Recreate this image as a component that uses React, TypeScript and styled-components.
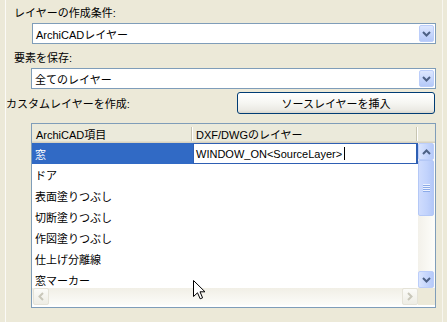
import React from 'react';
import styled, { createGlobalStyle } from 'styled-components';

const GlobalStyle = createGlobalStyle`
  html, body {
    margin: 0;
    padding: 0;
    background: #ece9d8;
  }
  body {
    font-family: "Liberation Sans", "Noto Sans CJK JP", sans-serif;
    font-size: 11px;
    color: #000;
  }
`;

const rows = ['窓', 'ドア', '表面塗りつぶし', '切断塗りつぶし', '作図塗りつぶし', '仕上げ分離線', '窓マーカー'];

const Chevron = ({ up, color = '#4d6185' }: { up?: boolean; color?: string }) => (
  <svg width="9" height="6" viewBox="0 0 9 6">
    <path d={up ? 'M1 5 L4.5 1.5 L8 5' : 'M1 1 L4.5 4.5 L8 1'} fill="none" stroke={color} strokeWidth="2" />
  </svg>
);

const SideChevron = ({ right, color = '#c9c7ba' }: { right?: boolean; color?: string }) => (
  <svg width="6" height="9" viewBox="0 0 6 9">
    <path d={right ? 'M1 1 L4.5 4.5 L1 8' : 'M5 1 L1.5 4.5 L5 8'} fill="none" stroke={color} strokeWidth="2" />
  </svg>
);

const App = () => {
  return (
    <Window>
      <GlobalStyle />
      <Panel>
        <Label>レイヤーの作成条件:</Label>
        <Combo indent={26} width={404}>
          <ComboText>ArchiCADレイヤー</ComboText>
          <DropButton><Chevron /></DropButton>
        </Combo>
        <Label top={2}>要素を保存:</Label>
        <Combo indent={25} width={405}>
          <ComboText>全てのレイヤー</ComboText>
          <DropButton><Chevron /></DropButton>
        </Combo>
        <ActionRow>
          <span>カスタムレイヤーを作成:</span>
          <PushButton>ソースレイヤーを挿入</PushButton>
        </ActionRow>
        <ListView>
          <Header>
            <HeaderCell width={160}>ArchiCAD項目<Separator /></HeaderCell>
            <HeaderCell width={225}>DXF/DWGのレイヤー<Separator /></HeaderCell>
          </Header>
          <Body>
            {rows.map((name, i) => (
              <Row key={name}>
                <NameCell selected={i === 0}>{name}</NameCell>
                {i === 0 && (
                  <EditField>
                    WINDOW_ON&lt;SourceLayer&gt;<Caret />
                  </EditField>
                )}
              </Row>
            ))}
          </Body>
          <VScroll>
            <ScrollButton><Chevron up /></ScrollButton>
            <Thumb><Grip /></Thumb>
            <Track />
            <ScrollButton><Chevron /></ScrollButton>
          </VScroll>
          <HScroll>
            <DisabledButton><SideChevron /></DisabledButton>
            <Track />
            <DisabledButton><SideChevron right /></DisabledButton>
          </HScroll>
          <Corner />
        </ListView>
      </Panel>
      <Cursor width="13" height="20" viewBox="0 0 13 20">
        <path d="M0.5 0.5 L0.5 16.5 L4.5 12.8 L7.2 18.8 L9.6 17.8 L7 11.8 L12 11.8 Z" fill="#fff" stroke="#000" strokeWidth="1" />
      </Cursor>
    </Window>
  );
};

const Window = styled.div`
  position: relative;
  width: 447px;
  height: 322px;
  overflow: hidden;
  box-sizing: border-box;
  padding-left: 5px;
  background: #ece9d8;
`;

const Panel = styled.div`
  width: 438px;
  height: 100%;
  box-sizing: border-box;
  border-left: 1px solid #fbfaf6;
  border-right: 1px solid #f7f6f0;
  display: flex;
  flex-direction: column;
`;

const Label = styled.div<{ top?: number }>`
  height: ${(p) => (p.top ? 24 - p.top : 22)}px;
  padding-top: ${(p) => p.top || 1}px;
  padding-left: 8px;
  display: flex;
  align-items: center;
`;

const Combo = styled.div<{ indent: number; width: number }>`
  margin-left: ${(p) => p.indent}px;
  width: ${(p) => p.width}px;
  height: 21px;
  box-sizing: border-box;
  border: 1px solid #7f9db9;
  background: #fff;
  display: flex;
  align-items: center;
`;

const ComboText = styled.span`
  flex: 1;
  padding-left: 3px;
`;

const DropButton = styled.div`
  width: 15px;
  height: 17px;
  margin-right: 1px;
  box-sizing: border-box;
  border: 1px solid #bccefa;
  border-radius: 2px;
  background: linear-gradient(180deg, #dde7fe 0%, #c6d6fc 55%, #b5c9f8 100%);
  display: flex;
  align-items: center;
  justify-content: center;
`;

const ActionRow = styled.div`
  margin-top: 3px;
  height: 22px;
  padding-right: 7px;
  display: flex;
  align-items: center;
  justify-content: space-between;
`;

const PushButton = styled.button`
  width: 198px;
  height: 22px;
  box-sizing: border-box;
  border: 1px solid #003c74;
  border-radius: 3px;
  background: linear-gradient(180deg, #ffffff 0%, #f6f6f2 50%, #ebeae4 85%, #d9d6cc 100%);
  font: inherit;
  color: #000;
  padding: 0;
`;

const ListView = styled.div`
  margin-top: 9px;
  margin-left: 25px;
  width: 405px;
  height: 185px;
  box-sizing: border-box;
  border: 1px solid #7f9db9;
  background: #fff;
  display: grid;
  grid-template-columns: 1fr 17px;
  grid-template-rows: 19px 145px 17px 1fr;
`;

const Header = styled.div`
  grid-column: 1 / -1;
  grid-row: 1;
  display: flex;
  background: #ebeadb;
  box-shadow: inset 0 -1px #d6d2c2, inset 0 -2px #e2decd;
`;

const HeaderCell = styled.div<{ width: number }>`
  width: ${(p) => p.width}px;
  box-sizing: border-box;
  padding-left: 4px;
  display: flex;
  align-items: center;
  justify-content: space-between;
`;

const Separator = styled.span`
  width: 1px;
  height: 14px;
  background: #c7c5b2;
  box-shadow: 1px 0 #fff;
`;

const Body = styled.div`
  grid-column: 1;
  grid-row: 2;
  overflow: hidden;
`;

const Row = styled.div`
  height: 21px;
  display: flex;
`;

const NameCell = styled.div<{ selected?: boolean }>`
  width: 161px;
  box-sizing: border-box;
  padding-left: 3px;
  display: flex;
  align-items: center;
  background: ${(p) => (p.selected ? '#316ac5' : 'transparent')};
  color: ${(p) => (p.selected ? '#fff' : '#000')};
`;

const EditField = styled.div`
  width: 225px;
  box-sizing: border-box;
  border: 1px solid #2e5fb3;
  border-right-width: 2px;
  padding-left: 2px;
  display: flex;
  align-items: center;
  background: #fff;
`;

const Caret = styled.span`
  width: 1px;
  height: 13px;
  margin-left: 2px;
  background: #000;
`;

const VScroll = styled.div`
  grid-column: 2;
  grid-row: 2;
  display: flex;
  flex-direction: column;
  background: linear-gradient(90deg, #f3f1ea 0%, #fdfdfa 100%);
`;

const ScrollButton = styled.div`
  width: 16px;
  height: 17px;
  box-sizing: border-box;
  border: 1px solid #bccefa;
  border-radius: 2px;
  background: linear-gradient(90deg, #dae5fe 0%, #c6d6fc 55%, #b6caf9 100%);
  display: flex;
  align-items: center;
  justify-content: center;
`;

const Thumb = styled.div`
  width: 16px;
  height: 56px;
  box-sizing: border-box;
  border: 1px solid #b4c8f6;
  border-radius: 2px;
  background: linear-gradient(90deg, #cfdcfd 0%, #c2d3fc 55%, #b4c8f8 100%);
  display: flex;
  align-items: center;
  justify-content: center;
`;

const Grip = styled.span`
  width: 7px;
  height: 8px;
  background: repeating-linear-gradient(180deg, #eef3fe 0 1px, #8cabe9 1px 2px);
`;

const Track = styled.div`
  flex: 1;
`;

const HScroll = styled.div`
  grid-column: 1;
  grid-row: 3;
  display: flex;
  padding-left: 1px;
  background: linear-gradient(180deg, #f1efe6 0%, #fcfcf9 100%);
`;

const DisabledButton = styled.div`
  width: 16px;
  height: 17px;
  box-sizing: border-box;
  border: 1px solid #e5e3d8;
  border-radius: 2px;
  background: linear-gradient(180deg, #fbfbf8 0%, #eeede5 100%);
  display: flex;
  align-items: center;
  justify-content: center;
`;

const Corner = styled.div`
  grid-column: 2;
  grid-row: 3;
  background: #ece9d8;
`;

const Cursor = styled.svg`
  position: absolute;
  left: 193px;
  top: 280px;
`;

export default App;
